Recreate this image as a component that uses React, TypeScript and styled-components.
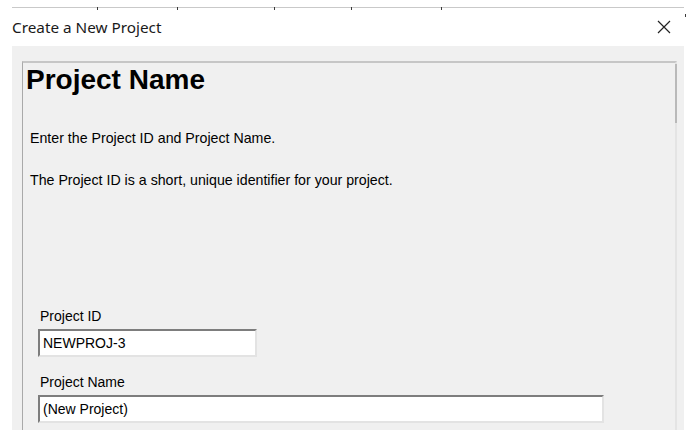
import React from "react";
import styled, { createGlobalStyle } from "styled-components";

const GlobalStyle = createGlobalStyle`
  html, body {
    margin: 0;
    padding: 0;
    background: #ffffff;
    height: 100%;
    overflow: hidden;
  }
  #root {
    height: 100%;
  }
`;

const Screen = styled.div`
  position: relative;
  display: flex;
  flex-direction: column;
  height: 100vh;
  background: #ffffff;
`;

const HeaderStrip = styled.div`
  position: relative;
  height: 8px;
  margin: 0 4px 0 12px;
  border-bottom: 1px solid #c9c9c9;
  box-sizing: border-box;
`;

const Tick = styled.span<{ $x: number; $y?: number }>`
  position: absolute;
  left: ${(p) => p.$x}px;
  top: ${(p) => p.$y ?? 7}px;
  width: 1px;
  height: 3px;
  background: #3a3a3a;
`;

const TitleBar = styled.div`
  display: flex;
  align-items: center;
  justify-content: space-between;
  height: 38px;
  padding: 0 16px 0 12px;
  box-sizing: border-box;
`;

const Title = styled.span`
  font-family: "Noto Sans", "Open Sans", sans-serif;
  font-size: 15.3px;
  color: #1a1a1a;
`;

const CloseButton = styled.button`
  display: flex;
  align-items: center;
  justify-content: center;
  width: 16px;
  height: 16px;
  padding: 0;
  border: none;
  background: transparent;
  cursor: pointer;
`;

const Body = styled.div`
  flex: 1;
  display: flex;
  margin: 0 4px 0 12px;
  padding: 15px 7px 0 10px;
  background: #f0f0f0;
  min-height: 0;
`;

const Panel = styled.div`
  position: relative;
  flex: 1;
  display: flex;
  flex-direction: column;
  border-top: 2px solid #c6c6c6;
  border-left: 1px solid #a9a9a9;
  border-right: 2px solid #e4e4e4;
  padding: 1px 0 0 3px;
  font-family: "Liberation Sans", Arial, sans-serif;
  color: #000000;
`;

const ScrollThumb = styled.div`
  position: absolute;
  right: -2px;
  top: 1px;
  width: 2px;
  height: 59px;
  background: #b9b9b9;
`;

const Heading = styled.h1`
  margin: 0;
  font-size: 28px;
  line-height: 32px;
  font-weight: bold;
`;

const Paragraph = styled.p`
  margin: 0 0 26px 4px;
  font-size: 14.2px;
  line-height: 16px;
`;

const Intro = styled.div`
  padding-top: 34px;
`;

const Fields = styled.div`
  display: flex;
  flex-direction: column;
  padding: 94px 0 0 12px;
`;

const Label = styled.label`
  display: block;
  margin: 0 0 5px 2px;
  font-size: 14px;
  line-height: 16px;
`;

const TextInput = styled.input<{ $width: number }>`
  box-sizing: border-box;
  width: ${(p) => p.$width}px;
  height: 28px;
  margin: 0 0 17px 0;
  padding: 0 3px;
  font-family: "Liberation Sans", Arial, sans-serif;
  font-size: 14px;
  color: #000000;
  background: #ffffff;
  border-top: 2px solid #7d7d7d;
  border-left: 2px solid #7d7d7d;
  border-right: 2px solid #e3e3e3;
  border-bottom: 2px solid #e3e3e3;
  outline: none;
`;

const ticks = [97, 177, 274, 351, 441];

export default function App() {
  return (
    <Screen>
      <GlobalStyle />
      <HeaderStrip>
        {ticks.map((x) => (
          <Tick key={x} $x={x - 12} />
        ))}
      </HeaderStrip>
      <Tick $x={685} $y={14} />
      <TitleBar>
        <Title>Create a New Project</Title>
        <CloseButton aria-label="Close">
          <svg width="14" height="14" viewBox="0 0 14 14">
            <path d="M1 1 L13 13 M13 1 L1 13" stroke="#222" strokeWidth="1.2" fill="none" />
          </svg>
        </CloseButton>
      </TitleBar>
      <Body>
        <Panel>
          <ScrollThumb />
          <Heading>Project Name</Heading>
          <Intro>
            <Paragraph>Enter the Project ID and Project Name.</Paragraph>
            <Paragraph>The Project ID is a short, unique identifier for your project.</Paragraph>
          </Intro>
          <Fields>
            <Label>Project ID</Label>
            <TextInput $width={219} defaultValue="NEWPROJ-3" />
            <Label>Project Name</Label>
            <TextInput $width={566} defaultValue="(New Project)" />
          </Fields>
        </Panel>
      </Body>
    </Screen>
  );
}
